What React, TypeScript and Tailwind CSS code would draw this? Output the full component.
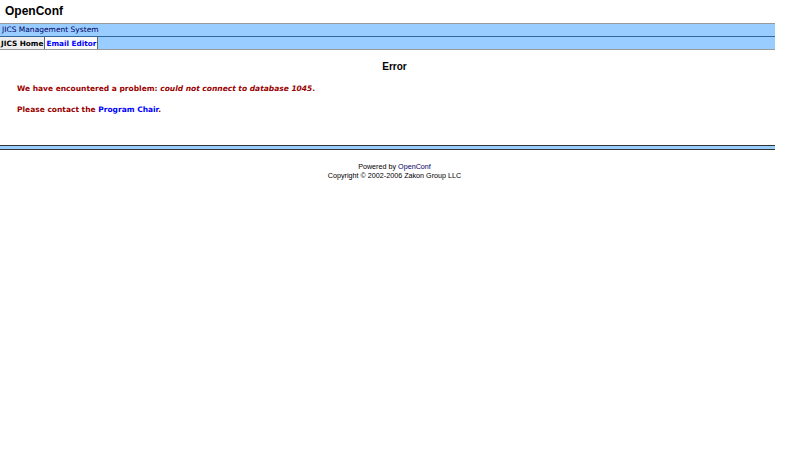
export default function App() {
  return (
    <div className="w-[789px] bg-white text-black">
      <div className="h-[23px] w-[775px] pl-[5px] pt-[3px] font-['Liberation_Sans',Arial,sans-serif] text-[12px] font-bold leading-[16px]">
        OpenConf
      </div>
      <div className="w-[775px] border-t border-[#999999] bg-[#99ccff]">
        <div className="h-[12px] pl-[2px] font-['DejaVu_Sans',Verdana,sans-serif] text-[7.5px] leading-[12px] text-[#000066]">
          JICS Management System
        </div>
        <div className="flex h-[14px] border-t border-[#336699] border-b border-b-[#999999]">
          <div className="border-r border-[#666666] bg-[#eeeeee] px-[1px] font-['DejaVu_Sans',Verdana,sans-serif] text-[7.3px] font-bold leading-[13px] text-black">
            JICS Home
          </div>
          <div className="border-r border-[#666666] bg-[#fafafa] px-[1px] font-['DejaVu_Sans',Verdana,sans-serif] text-[7.3px] font-bold leading-[13px] text-[#0000ff]">
            Email Editor
          </div>
        </div>
      </div>

      <div className="pt-[10px] text-center font-['Liberation_Sans',Arial,sans-serif] text-[10px] font-bold leading-[14px]">
        Error
      </div>
      <div className="px-[17px] pt-[4px] font-['DejaVu_Sans',Verdana,sans-serif] text-[7.5px] font-bold leading-[11px] text-[#990000]">
        <p className="py-[5px]">
          We have encountered a problem: <i>could not connect to database 1045</i>.
        </p>
        <p className="py-[5px]">
          Please contact the <span className="text-[#0000ff]">Program Chair</span>.
        </p>
      </div>

      <div className="mt-[25px] h-[5px] w-[775px] border-y border-[#333333] bg-[#99ccff]" />

      <div className="pt-[12px] text-center font-['Liberation_Sans',Arial,sans-serif] text-[7.2px] leading-[9px]">
        <div>
          Powered by <span className="text-[#000066]">OpenConf</span>
        </div>
        <div>Copyright © 2002-2006 Zakon Group LLC</div>
      </div>
    </div>
  );
}
